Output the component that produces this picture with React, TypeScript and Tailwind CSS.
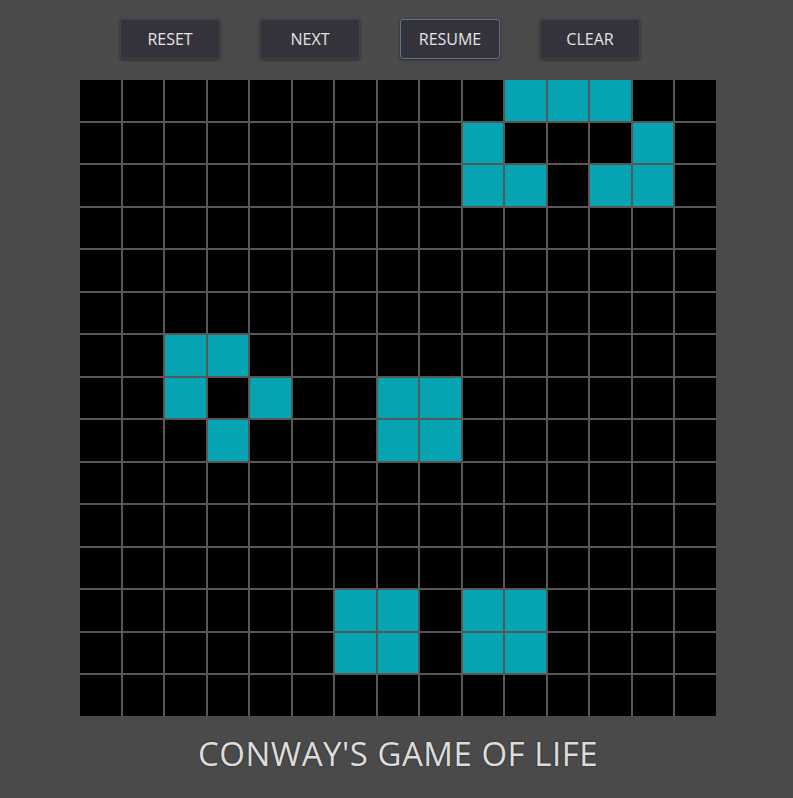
import { useState } from "react";

const SIZE = 15;

const INITIAL: [number, number][] = [
  [0, 10], [0, 11], [0, 12],
  [1, 9], [1, 13],
  [2, 9], [2, 10], [2, 12], [2, 13],
  [6, 2], [6, 3],
  [7, 2], [7, 4], [7, 7], [7, 8],
  [8, 3], [8, 7], [8, 8],
  [12, 6], [12, 7], [12, 9], [12, 10],
  [13, 6], [13, 7], [13, 9], [13, 10],
];

function makeBoard() {
  const b = Array.from({ length: SIZE }, () => Array(SIZE).fill(false));
  INITIAL.forEach(([r, c]) => (b[r][c] = true));
  return b;
}

function step(b: boolean[][]) {
  return b.map((row, r) =>
    row.map((alive, c) => {
      let n = 0;
      for (let dr = -1; dr <= 1; dr++)
        for (let dc = -1; dc <= 1; dc++) {
          if (!dr && !dc) continue;
          const rr = r + dr;
          const cc = c + dc;
          if (rr >= 0 && rr < SIZE && cc >= 0 && cc < SIZE && b[rr][cc]) n++;
        }
      return alive ? n === 2 || n === 3 : n === 3;
    })
  );
}

function Button({ label, active, onClick }: { label: string; active?: boolean; onClick: () => void }) {
  return (
    <button
      onClick={onClick}
      className={`w-[100px] h-[40px] rounded-[3px] bg-[#34333b] text-[16px] text-[#e4e4e4] shadow-[0_1px_3px_rgba(0,0,0,0.45)] border ${
        active ? "border-[#5b7394]" : "border-[#424149]"
      }`}
    >
      {label}
    </button>
  );
}

export default function App() {
  const [board, setBoard] = useState<boolean[][]>(makeBoard);
  const [running, setRunning] = useState(false);

  return (
    <div
      className="min-h-[798px] w-full bg-[#4a4a4a] flex flex-col"
      style={{ fontFamily: '"Open Sans", "Noto Sans", sans-serif' }}
    >
      <div className="flex gap-[40px] pl-[120px] pt-[19px]">
        <Button label="RESET" onClick={() => setBoard(makeBoard())} />
        <Button label="NEXT" onClick={() => setBoard(step(board))} />
        <Button label="RESUME" active onClick={() => setRunning(!running)} />
        <Button label="CLEAR" onClick={() => setBoard(Array.from({ length: SIZE }, () => Array(SIZE).fill(false)))} />
      </div>

      <div className="ml-[80px] mt-[21px] w-[636px] h-[636px] bg-[#575757] grid grid-cols-[repeat(15,1fr)] grid-rows-[repeat(15,1fr)] gap-[2px]">
        {board.map((row, r) =>
          row.map((alive, c) => (
            <div
              key={`${r}-${c}`}
              onClick={() => {
                const next = board.map((x) => x.slice());
                next[r][c] = !next[r][c];
                setBoard(next);
              }}
              className={alive ? "bg-[#05a5b4]" : "bg-black"}
            />
          ))
        )}
      </div>

      <h1 className="ml-[80px] w-[636px] text-center mt-[18px] text-[33px] leading-[40px] text-[#dcdcdc] tracking-[0.5px] [text-shadow:0_0_2px_rgba(0,0,0,0.5)]">
        CONWAY'S GAME OF LIFE
      </h1>
    </div>
  );
}
